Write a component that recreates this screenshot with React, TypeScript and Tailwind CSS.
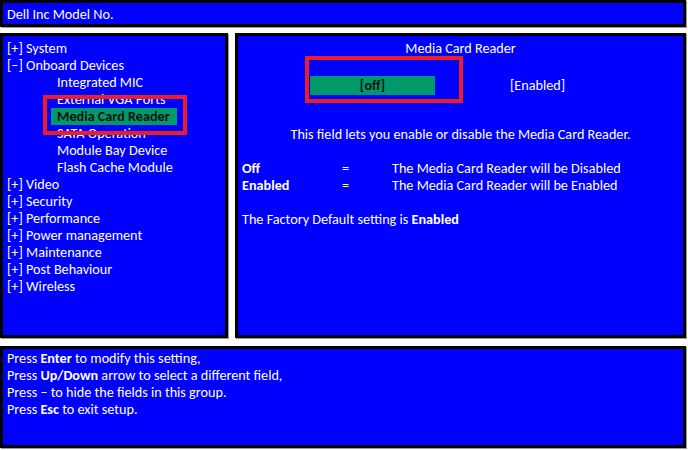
const font = { fontFamily: "Calibri, Carlito, Lato, 'Open Sans', sans-serif" };

const panel =
  "relative border-[3px] border-black bg-[#0000ff] text-white shadow-[1px_1px_0_#9a9a9a]";

const menu: { label: string; sign?: string; sub?: boolean; active?: boolean }[] = [
  { sign: "[+]", label: "System" },
  { sign: "[\u2013]", label: "Onboard Devices" },
  { label: "Integrated MIC", sub: true },
  { label: "External VGA Ports", sub: true },
  { label: "Media Card Reader", sub: true, active: true },
  { label: "SATA Operation", sub: true },
  { label: "Module Bay Device", sub: true },
  { label: "Flash Cache Module", sub: true },
  { sign: "[+]", label: "Video" },
  { sign: "[+]", label: "Security" },
  { sign: "[+]", label: "Performance" },
  { sign: "[+]", label: "Power management" },
  { sign: "[+]", label: "Maintenance" },
  { sign: "[+]", label: "Post Behaviour" },
  { sign: "[+]", label: "Wireless" },
];

export default function App() {
  return (
    <div className="h-[450px] w-[688px] bg-white text-[14.2px] leading-[17px]" style={font}>
      <div className={`${panel} h-[27px] w-[686px] pl-[4px] leading-[22px]`}>Dell Inc Model No.</div>

      <div className="mt-[6px] flex h-[305px] w-[686px] gap-[7px]">
        <div className={`${panel} w-[228px] pl-[4px] pt-[4px]`}>
          {menu.map((item) =>
            item.sub ? (
              <div key={item.label} className="pl-[50px]">
                {item.active ? (
                  <span className="-ml-[6px] inline-block w-[126px] bg-[#009a6a] pl-[6px] font-semibold text-[#111]">
                    {item.label}
                  </span>
                ) : (
                  item.label
                )}
              </div>
            ) : (
              <div key={item.label}>
                {item.sign} {item.label}
              </div>
            ),
          )}
          <div className="pointer-events-none absolute left-[40px] top-[59px] h-[40px] w-[144px] border-4 border-[#ee1c24]" />
        </div>

        <div className={`${panel} flex-1 pt-[4px]`}>
          <div className="text-center">Media Card Reader</div>
          <div className="mt-[19px] flex items-center pl-[72px]">
            <div className="flex h-[19px] w-[125px] items-center justify-center bg-[#009a6a] font-semibold text-[#111]">
              [off]
            </div>
            <div className="ml-[75px]">[Enabled]</div>
          </div>
          <div className="mt-[31px] text-center">This field lets you enable or disable the Media Card Reader.</div>
          <div className="mt-[17px] pl-[4px]">
            <div className="flex">
              <span className="w-[100px] font-bold">Off</span>
              <span className="w-[50px]">=</span>
              <span>The Media Card Reader will be Disabled</span>
            </div>
            <div className="flex">
              <span className="w-[100px] font-bold">Enabled</span>
              <span className="w-[50px]">=</span>
              <span>The Media Card Reader will be Enabled</span>
            </div>
            <div className="mt-[17px]">
              The Factory Default setting is <span className="font-bold">Enabled</span>
            </div>
          </div>
          <div className="pointer-events-none absolute left-[67px] top-[20px] h-[47px] w-[158px] border-4 border-[#ee1c24]" />
        </div>
      </div>

      <div className={`${panel} mt-[8px] h-[102px] w-[686px] pl-[4px] pt-[1px]`}>
        <div>
          Press <span className="font-bold">Enter</span> to modify this setting,
        </div>
        <div>
          Press <span className="font-bold">Up/Down</span> arrow to select a different field,
        </div>
        <div>Press &ndash; to hide the fields in this group.</div>
        <div>
          Press <span className="font-bold">Esc</span> to exit setup.
        </div>
      </div>
    </div>
  );
}
